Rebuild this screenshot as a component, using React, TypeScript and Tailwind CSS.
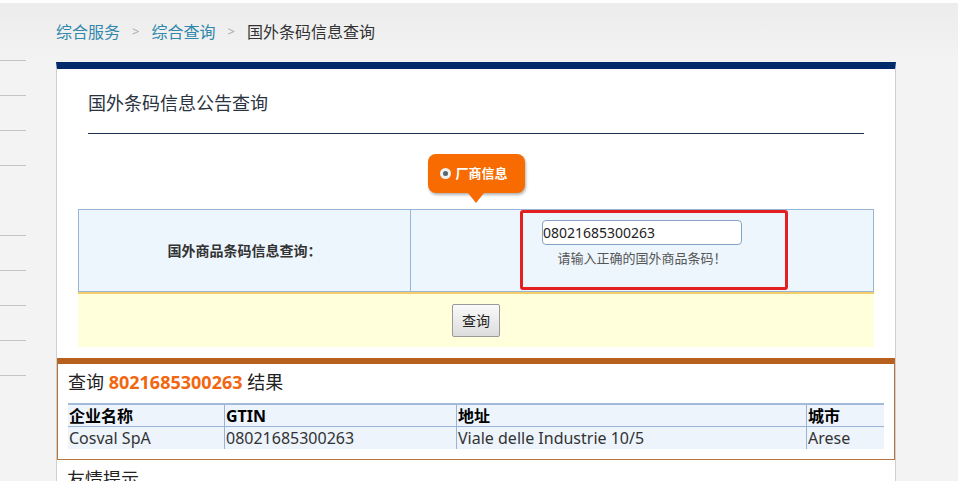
import React from 'react';

const FONT = '"Noto Sans", "Noto Sans CJK SC", sans-serif';

function SideLines() {
  const tops = [60, 95, 130, 165, 235, 270, 305, 340, 375];
  return (
    <div className="relative w-[26px] shrink-0">
      {tops.map((t) => (
        <div key={t} className="absolute left-0 w-[26px] h-px bg-[#c4c4c4]" style={{ top: t - 3 }} />
      ))}
    </div>
  );
}

function VendorTab() {
  return (
    <div className="flex justify-center pt-[20px]">
      <div className="relative">
        <div className="flex items-center gap-[5px] h-[39px] w-[97px] pl-[12px] rounded-[8px] bg-[#f76b00] shadow-[1px_2px_3px_rgba(0,0,0,0.3)]">
          <span className="flex items-center justify-center w-[11px] h-[11px] rounded-full bg-[#eef0f2]">
            <span className="w-[5px] h-[5px] rounded-full bg-[#5a6470]" />
          </span>
          <span className="text-[13px] font-bold text-white">厂商信息</span>
        </div>
        <div className="absolute left-1/2 -translate-x-1/2 top-[39px] w-0 h-0 border-l-[8px] border-r-[8px] border-t-[10px] border-l-transparent border-r-transparent border-t-[#f76b00]" />
      </div>
    </div>
  );
}

function QueryForm() {
  return (
    <div className="mx-[21px] mt-[16px]">
      <div className="flex h-[83px] border border-[#97b5d5] bg-[#edf5fd]">
        <div className="w-[332px] flex items-center justify-center border-r border-[#97b5d5] text-[14px] font-bold text-[#333] font-['Noto_Sans_CJK_SC',sans-serif]">
          国外商品条码信息查询：
        </div>
        <div className="relative flex-1 flex flex-col items-center pt-[10px]">
          <div className="w-[200px] h-[25px] border border-[#86a3c4] rounded-[4px] bg-white flex items-center text-[14px] text-[#222] leading-none">
            08021685300263
          </div>
          <div className="mt-[3px] text-[13px] text-[#555] font-['Noto_Sans_CJK_SC',sans-serif]">请输入正确的国外商品条码！</div>
          <div className="absolute left-[109px] top-0 w-[268px] h-[80px] border-[3px] border-[#e3201f] rounded-[3px]" />
        </div>
      </div>
      <div className="h-[55px] border-t-2 border-[#f3cd6a] bg-[#ffffdc] flex items-center justify-center">
        <button className="w-[48px] h-[33px] border border-[#9a9a9a] rounded-[2px] bg-gradient-to-b from-[#fafafa] to-[#dcdcdc] text-[14px] text-[#222]">
          查询
        </button>
      </div>
    </div>
  );
}

function ResultBox() {
  const cols = ['w-[156px]', 'w-[232px]', 'w-[350px]', 'flex-1'];
  const head = ['企业名称', 'GTIN', '地址', '城市'];
  const row = ['Cosval SpA', '08021685300263', 'Viale delle Industrie 10/5', 'Arese'];
  return (
    <div className="mt-[11px] border-t-[6px] border-[#b8601d] border-x border-b border-x-[#b9733c] border-b-[#b9733c] bg-white pb-[10px]">
      <div className="px-[10px] pt-[6px] h-[39px] text-[18px] text-[#222] leading-[24px]">
        查询 <span className="font-bold text-[#f2660f]">8021685300263</span> 结果
      </div>
      <div className="ml-[10px] mr-[10px] border-t-2 border-[#a3bbdb] bg-[#edf4fc]">
        <div className="flex h-[22px] border-b border-[#9ab4d8]">
          {head.map((h, i) => (
            <div key={h} className={`${cols[i]} ${i > 0 ? 'border-l border-[#9ab4d8]' : ''} px-[1px] text-[16px] font-bold text-black leading-[22px]`}>
              {h}
            </div>
          ))}
        </div>
        <div className="flex h-[22px]">
          {row.map((c, i) => (
            <div key={c} className={`${cols[i]} ${i > 0 ? 'border-l border-[#9ab4d8]' : ''} px-[1px] text-[16px] text-[#333] leading-[22px]`}>
              {c}
            </div>
          ))}
        </div>
      </div>
    </div>
  );
}

export default function App() {
  return (
    <div className="w-[958px] h-[481px] overflow-hidden bg-[#f3f3f3] border-t-[3px] border-white flex" style={{ fontFamily: FONT }}>
      <SideLines />
      <div className="ml-[30px] w-[840px] flex flex-col">
        <div className="shrink-0 h-[59px] flex items-center gap-[12px] text-[16px] pb-[2px] bg-gradient-to-b from-[#ececec] to-[#f3f3f3] -ml-[56px] pl-[56px] w-[958px]">
          <span className="text-[#2f87ab]">综合服务</span>
          <span className="text-[#aaa] text-[13px]">&gt;</span>
          <span className="text-[#2f87ab]">综合查询</span>
          <span className="text-[#aaa] text-[13px]">&gt;</span>
          <span className="text-[#333]">国外条码信息查询</span>
        </div>
        <div className="flex-1 shrink-0 bg-white border-t-[7px] border-[#002b6b] border-x border-x-[#cfcfcf]">
          <div className="mx-[31px] pt-[21px] h-[65px] border-b border-[#1d3050] text-[18px] text-[#2a3340] leading-[26px]">
            国外条码信息公告查询
          </div>
          <VendorTab />
          <QueryForm />
          <ResultBox />
          <div className="px-[10px] pt-[6px] text-[18px] text-[#222]">友情提示</div>
        </div>
      </div>
    </div>
  );
}
